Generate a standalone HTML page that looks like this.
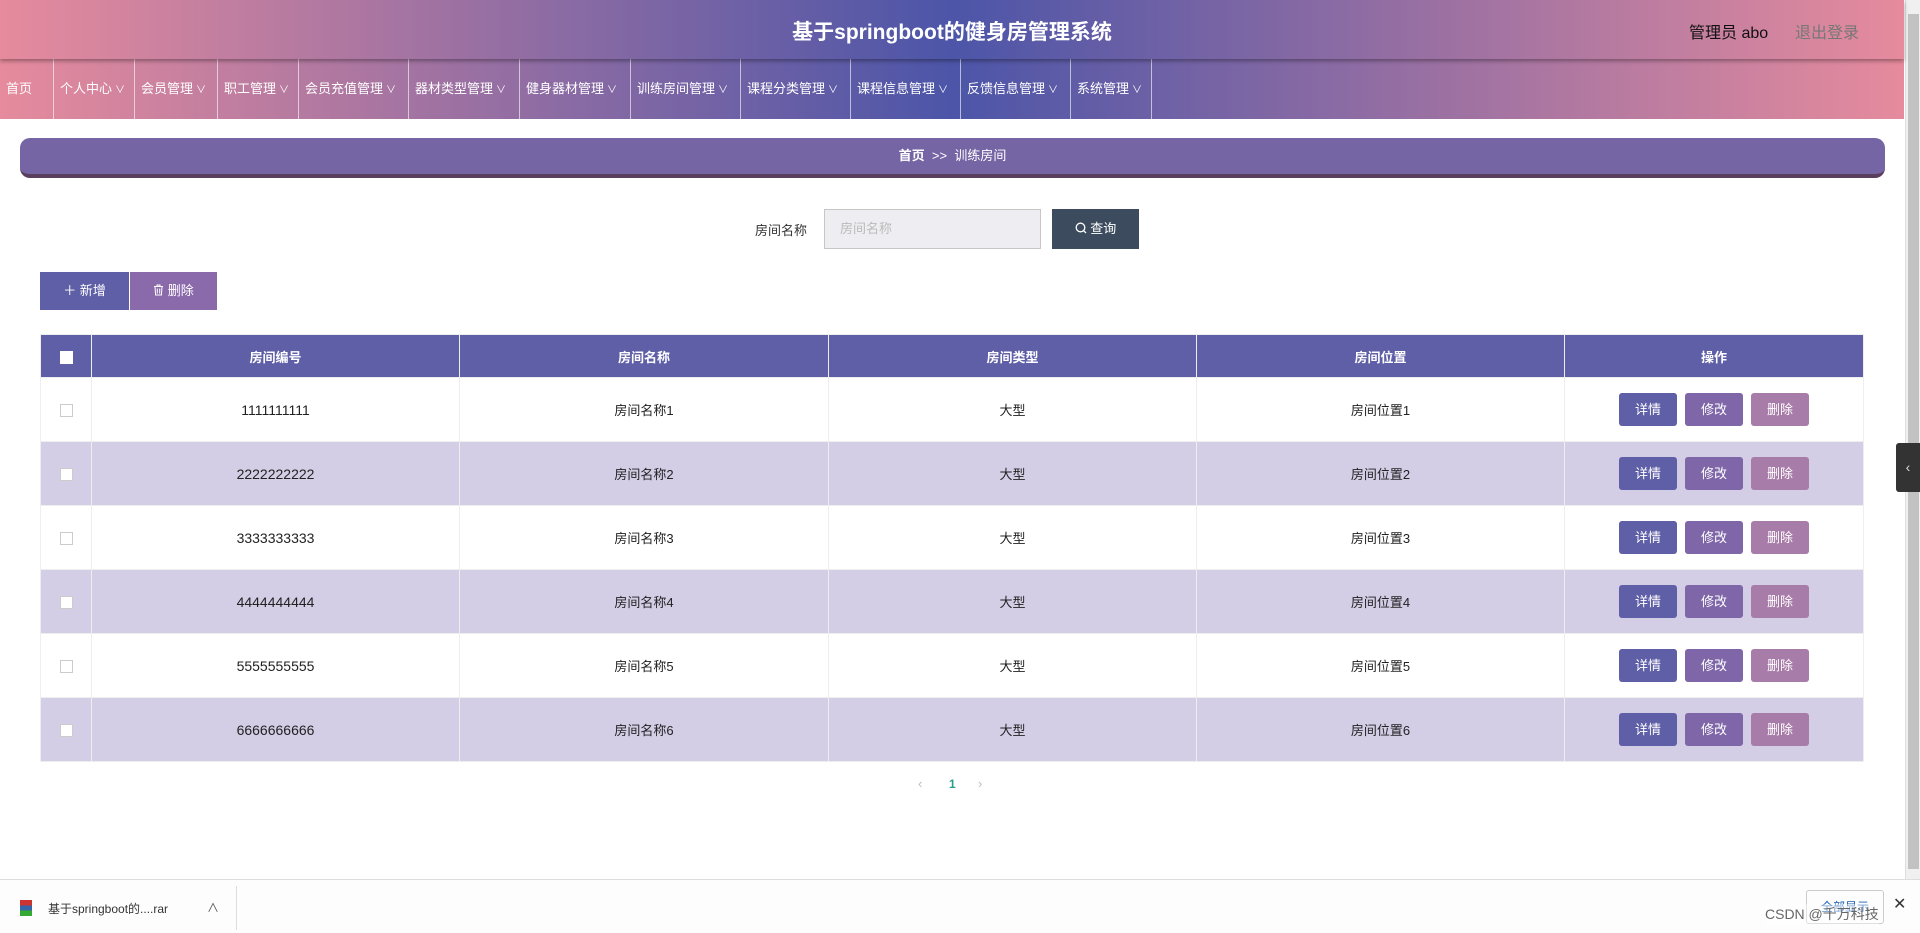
<!DOCTYPE html>
<html><head><meta charset="utf-8"><style>
*{margin:0;padding:0;box-sizing:border-box}
body{width:1920px;height:933px;overflow:hidden;background:#fff;font-family:"Liberation Sans","Noto Sans CJK SC",sans-serif;position:relative}
.hdr{position:absolute;left:0;top:0;width:1904px;height:59px;background:linear-gradient(90deg,#e68b9d 0%,#4c55a8 50%,#e68b9d 100%);box-shadow:0 2px 4px rgba(0,0,0,.35);z-index:2}
.hdr .t{position:absolute;left:0;width:1904px;top:16px;text-align:center;color:#fff;font-size:21px;font-weight:bold}
.hdr .u{position:absolute;left:1689px;top:19px;font-size:16px;color:#111}
.hdr .o{position:absolute;left:1795px;top:19px;font-size:16px;color:#777}
.nav{position:absolute;left:0;top:59px;width:1904px;height:60px;background:linear-gradient(90deg,#e68b9d 0%,#4c55a8 50%,#e68b9d 100%)}
.nav div{position:absolute;top:0;height:60px;line-height:60px;color:#fff;font-size:13px;border-right:1px solid rgba(255,255,255,.6);padding-left:6px;white-space:nowrap}
.nav div i{font-style:normal;font-size:10px;margin-left:3px}
.sb{position:absolute;left:1905px;top:0;width:15px;height:879px;background:#f0f0f0;border-left:1px solid #ddd}
.sb b{position:absolute;left:2px;top:14px;width:11px;height:855px;background:#c2c2c2}
.bc{position:absolute;left:20px;top:138px;width:1865px;height:40px;background:#7565a5;border-radius:10px;border-bottom:4px solid #5a3e5e;text-align:center;line-height:36px;color:#fff;font-size:13px}
.lbl{position:absolute;left:755px;top:220px;font-size:13px;color:#333}
.inp{position:absolute;left:824px;top:209px;width:217px;height:40px;background:#eeeef2;border:1px solid #c6c6c6;color:#bbb;font-size:13px;line-height:38px;padding-left:15px}
.btn{position:absolute;color:#fff;font-size:13px;text-align:center}
table{position:absolute;left:40px;top:334px;width:1824px;border-collapse:collapse;font-size:14px;color:#222}
th{background:#5f5fa8;color:#fff;height:43px;font-size:13px;border:1px solid #eee}
td{height:64px;text-align:center;border:1px solid #eee;font-size:13px}
td.n{font-size:14px}
tr.a td{background:#d3cde5}
.cb{display:inline-block;width:13px;height:13px;border:1px solid #ccc;background:#fff;vertical-align:middle}
th .cb{border-color:#fff}
.ab{display:inline-block;width:58px;height:33px;line-height:33px;color:#fff;border-radius:3px;margin:0 4px;font-size:13px}
.dl{position:absolute;left:0;top:879px;width:1920px;height:54px;background:#fdfdfd;border-top:1px solid #ddd}
.tab{position:absolute;left:1896px;top:443px;width:24px;height:49px;background:#333;border-radius:3px 0 0 3px;color:#ddd;font-size:14px;line-height:49px;text-align:center}
</style></head><body>
<div class="hdr"><div class="t">基于springboot的健身房管理系统</div><div class="u">管理员 abo</div><div class="o">退出登录</div></div>
<div class="nav">
<div style="left:0;width:54px">首页</div>
<div style="left:54px;width:81px">个人中心<i>∨</i></div>
<div style="left:135px;width:83px">会员管理<i>∨</i></div>
<div style="left:218px;width:81px">职工管理<i>∨</i></div>
<div style="left:299px;width:110px">会员充值管理<i>∨</i></div>
<div style="left:409px;width:111px">器材类型管理<i>∨</i></div>
<div style="left:520px;width:111px">健身器材管理<i>∨</i></div>
<div style="left:631px;width:110px">训练房间管理<i>∨</i></div>
<div style="left:741px;width:110px">课程分类管理<i>∨</i></div>
<div style="left:851px;width:110px">课程信息管理<i>∨</i></div>
<div style="left:961px;width:110px">反馈信息管理<i>∨</i></div>
<div style="left:1071px;width:81px">系统管理<i>∨</i></div>
</div>
<div class="sb"><b></b></div>
<div class="bc"><b>首页</b> &nbsp;&gt;&gt;&nbsp; 训练房间</div>
<div class="lbl">房间名称</div>
<div class="inp">房间名称</div>
<div class="btn" style="left:1052px;top:209px;width:87px;height:40px;line-height:40px;background:#3d4b5f"><svg width="12" height="12" viewBox="0 0 12 12" style="vertical-align:-1px"><circle cx="5.5" cy="5.5" r="4.3" fill="none" stroke="#fff" stroke-width="1.3"/><path d="M8.6 8.6L11 11" stroke="#fff" stroke-width="1.3"/></svg> 查询</div>
<div class="btn" style="left:40px;top:272px;width:89px;height:38px;line-height:38px;background:#5f5fa8">＋ 新增</div>
<div class="btn" style="left:130px;top:272px;width:87px;height:38px;line-height:38px;background:#8b6aab"><svg width="11" height="12" viewBox="0 0 11 12" style="vertical-align:-1px"><path d="M1 2.5h9M4 2.5V1h3v1.5M2 2.5l.6 8.5h5.8l.6-8.5M4.3 4.5v5M6.7 4.5v5" fill="none" stroke="#fff" stroke-width="1"/></svg> 删除</div>
<table>
<tr><th style="width:51px"><span class="cb"></span></th><th style="width:368px">房间编号</th><th style="width:369px">房间名称</th><th style="width:368px">房间类型</th><th style="width:368px">房间位置</th><th>操作</th></tr>
<tr><td><span class="cb"></span></td><td class="n">1111111111</td><td>房间名称1</td><td>大型</td><td>房间位置1</td><td><span class="ab" style="background:#5f5fa8">详情</span><span class="ab" style="background:#7e66a8">修改</span><span class="ab" style="background:#a87ca8">删除</span></td></tr>
<tr class="a"><td><span class="cb"></span></td><td class="n">2222222222</td><td>房间名称2</td><td>大型</td><td>房间位置2</td><td><span class="ab" style="background:#5f5fa8">详情</span><span class="ab" style="background:#7e66a8">修改</span><span class="ab" style="background:#a87ca8">删除</span></td></tr>
<tr><td><span class="cb"></span></td><td class="n">3333333333</td><td>房间名称3</td><td>大型</td><td>房间位置3</td><td><span class="ab" style="background:#5f5fa8">详情</span><span class="ab" style="background:#7e66a8">修改</span><span class="ab" style="background:#a87ca8">删除</span></td></tr>
<tr class="a"><td><span class="cb"></span></td><td class="n">4444444444</td><td>房间名称4</td><td>大型</td><td>房间位置4</td><td><span class="ab" style="background:#5f5fa8">详情</span><span class="ab" style="background:#7e66a8">修改</span><span class="ab" style="background:#a87ca8">删除</span></td></tr>
<tr><td><span class="cb"></span></td><td class="n">5555555555</td><td>房间名称5</td><td>大型</td><td>房间位置5</td><td><span class="ab" style="background:#5f5fa8">详情</span><span class="ab" style="background:#7e66a8">修改</span><span class="ab" style="background:#a87ca8">删除</span></td></tr>
<tr class="a"><td><span class="cb"></span></td><td class="n">6666666666</td><td>房间名称6</td><td>大型</td><td>房间位置6</td><td><span class="ab" style="background:#5f5fa8">详情</span><span class="ab" style="background:#7e66a8">修改</span><span class="ab" style="background:#a87ca8">删除</span></td></tr>
</table>
<div style="position:absolute;left:918px;top:776px;font-size:13px;color:#bbb">‹</div>
<div style="position:absolute;left:949px;top:777px;font-size:12px;color:#2a9d8f;font-weight:bold">1</div>
<div style="position:absolute;left:978px;top:776px;font-size:13px;color:#bbb">›</div>
<div class="tab">‹</div>
<div class="dl">
<div style="position:absolute;left:20px;top:20px;width:12px;height:16px;background:linear-gradient(#c33 0,#c33 33%,#36a 33%,#36a 66%,#3a3 66%)"></div>
<div style="position:absolute;left:48px;top:20px;font-size:12px;color:#333">基于springboot的....rar</div>
<div style="position:absolute;left:207px;top:19px;font-size:12px;color:#555">∧</div>
<div style="position:absolute;left:236px;top:6px;width:1px;height:44px;background:#ddd"></div>
<div style="position:absolute;left:1806px;top:10px;width:78px;height:34px;border:1px solid #ccc;border-radius:3px;font-size:12px;color:#1a5fb4;text-align:center;line-height:32px">全部显示</div>
<div style="position:absolute;left:1765px;top:24px;font-size:14px;color:#666;background:rgba(255,255,255,.4)">CSDN @千万科技</div>
<div style="position:absolute;left:1893px;top:14px;font-size:16px;color:#333">✕</div>
</div>
</body></html>
